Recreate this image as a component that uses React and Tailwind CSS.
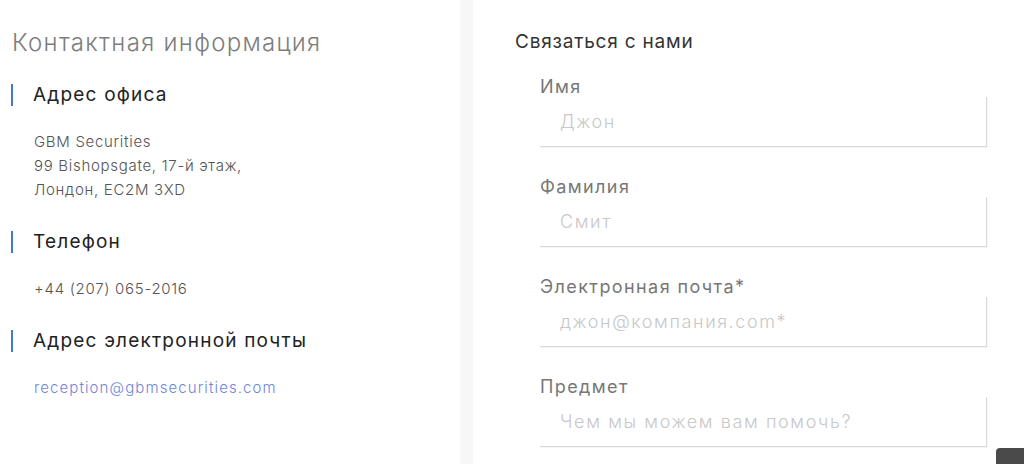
import React from 'react';

const font = { fontFamily: '"Inter", "Noto Sans", sans-serif' };

const Section = ({ title, children }) => (
    <div>
        <h3 className="border-l-2 border-[#3f7bd0] pl-5 text-[19px] leading-[22px] tracking-[1.2px] text-[#222]">{title}</h3>
        <div className="mt-6 pl-[23px] text-[15px] leading-6 font-light tracking-[0.7px] text-[#555]">{children}</div>
    </div>
);

const Field = ({ label, placeholder }) => (
    <div className="mb-[30px]">
        <label className="block text-[18px] leading-5 tracking-[1.4px] text-[#777]">{label}</label>
        <input
            placeholder={placeholder}
            className="block w-full h-[50px] px-5 text-[18px] font-light tracking-[1.6px] bg-white border-r border-b border-[#d9d9d9] shadow-[1px_1px_1px_rgba(0,0,0,0.04)] outline-none placeholder:text-[#c8c8c8]"
        />
    </div>
);

export default function App() {
    return (
        <div className="w-[1024px] h-[464px] overflow-hidden bg-white flex relative" style={font}>
            {/* left */}
            <div className="w-[460px] shrink-0 pt-[27px] pl-[11px]">
                <h2 className="pl-px text-[24px] leading-8 font-light tracking-[1.3px] text-[#7d7d7d]">Контактная информация</h2>
                <div className="mt-[25px] flex flex-col gap-[29px]">
                    <Section title="Адрес офиса">
                        <p>GBM Securities</p>
                        <p>99 Bishopsgate, 17-й этаж,</p>
                        <p>Лондон, EC2M 3XD</p>
                    </Section>
                    <Section title="Телефон">
                        <p>+44 (207) 065-2016</p>
                    </Section>
                    <Section title="Адрес электронной почты">
                        <a href="#" className="tracking-[1.1px] text-[#6f85dc]">reception@gbmsecurities.com</a>
                    </Section>
                </div>
            </div>

            {/* divider strip */}
            <div className="w-[13px] shrink-0 bg-[#f7f7f7]"></div>

            {/* right */}
            <div className="flex-1 pt-[30px] pl-[42px] pr-[37px]">
                <h2 className="text-[19px] leading-6 tracking-[0.8px] text-[#333]">Связаться с нами</h2>
                <form className="mt-[23px] pl-[25px]">
                    <Field label="Имя" placeholder="Джон" />
                    <Field label="Фамилия" placeholder="Смит" />
                    <Field label="Электронная почта*" placeholder="джон@компания.com*" />
                    <Field label="Предмет" placeholder="Чем мы можем вам помочь?" />
                </form>
            </div>

            <div className="absolute right-0 bottom-0 w-7 h-4 rounded-tl bg-[#4a4a4a]"></div>
        </div>
    );
}
